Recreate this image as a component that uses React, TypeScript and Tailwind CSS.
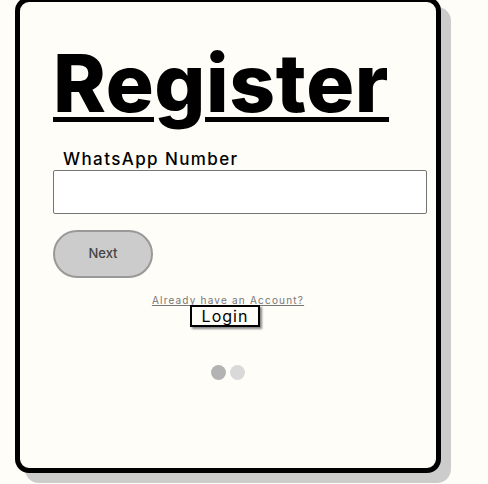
import React from "react";

export default function App() {
  return (
    <div className="min-h-screen bg-[#fffdf7] pl-[15px] overflow-hidden" style={{ fontFamily: "Inter, 'Open Sans', sans-serif" }}>
      <div className="mt-[-3px] w-[426px] h-[476px] rounded-[14px] border-[5px] border-black bg-[#fffdf7] shadow-[10px_10px_0_#cccccc] px-[33px] flex flex-col">
        {/* Heading */}
        <h1 className="mt-[36px] text-[80px] leading-[90px] font-extrabold text-black underline decoration-[5px] underline-offset-[5px] tracking-[0.6px]">
          Register
        </h1>

        {/* Field */}
        <label className="mt-[21px] ml-[10px] text-[17px] leading-[20px] font-medium tracking-[1.4px] text-black">
          WhatsApp Number
        </label>
        <input
          type="text"
          className="mt-[1px] w-[374px] h-[44px] bg-white border border-[#767676] rounded-[2px] outline-none px-2"
        />

        <button className="mt-[16px] w-[100px] h-[48px] rounded-full bg-[#cccccc] border-2 border-[#999999] text-[13px] text-[#444] font-medium">
          Next
        </button>

        {/* Login */}
        <div className="mt-[16px] flex flex-col items-center">
          <a className="text-[10px] leading-[12px] tracking-[1.2px] text-[#777] underline">
            Already have an Account?
          </a>
          <button className="mt-[-1px] mr-[6px] w-[70px] h-[22px] border-2 border-black bg-[#fffdf7] shadow-[2px_2px_2px_#888] text-[16px] leading-[16px] font-normal tracking-[1px] text-black">
            Login
          </button>
        </div>

        {/* Dots */}
        <div className="mt-[38px] flex justify-center gap-[4px]">
          <span className="w-[15px] h-[15px] rounded-full bg-[#b3b3b3]" />
          <span className="w-[15px] h-[15px] rounded-full bg-[#d9d9d9]" />
        </div>
      </div>
    </div>
  );
}
